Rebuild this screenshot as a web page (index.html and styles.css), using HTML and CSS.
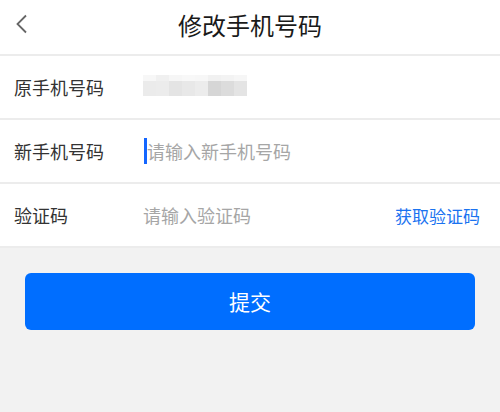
FILE: index.html
```html
<!DOCTYPE html>
<html lang="zh">
<head>
<meta charset="utf-8">
<link rel="stylesheet" href="styles.css">
</head>
<body>
<div class="page">
  <header class="header">
    <svg class="back" width="14" height="20" viewBox="0 0 14 20"><path d="M11 1.5 L2.5 10 L11 18.5" fill="none" stroke="#666" stroke-width="1.8"/></svg>
    <h1 class="title">修改手机号码</h1>
  </header>
  <div class="form">
    <div class="row">
      <span class="label">原手机号码</span>
      <div class="blur">
        <div class="blur-top">
          <i style="background:#f7f7f7"></i><i style="background:#f0f0f0"></i><i style="background:#f6f6f6"></i><i style="background:#f8f8f8"></i><i style="background:#f7f7f7"></i><i style="background:#f1f1f1"></i><i style="background:#f3f3f3"></i><i style="background:#f6f6f6"></i>
        </div>
        <div class="blur-main">
          <i style="background:#ebebeb"></i><i style="background:#ececec"></i><i style="background:#e4e4e4"></i><i style="background:#e8e8e8"></i><i style="background:#ececec"></i><i style="background:#d6d6d6"></i><i style="background:#dcdcdc"></i><i style="background:#e4e4e4"></i>
        </div>
      </div>
    </div>
    <div class="row">
      <span class="label">新手机号码</span>
      <span class="cursor"></span>
      <span class="placeholder">请输入新手机号码</span>
    </div>
    <div class="row">
      <span class="label">验证码</span>
      <span class="placeholder">请输入验证码</span>
      <span class="code">获取验证码</span>
    </div>
  </div>
  <div class="actions">
    <button class="submit">提交</button>
  </div>
</div>
</body>
</html>
```
FILE: styles.css
```css
* { box-sizing: border-box; }
html, body { margin: 0; padding: 0; }
body {
  width: 500px;
  height: 412px;
  overflow: hidden;
  background: #f2f2f2;
  font-family: "Noto Sans CJK SC", "Noto Sans", sans-serif;
}
.header {
  height: 56px;
  background: #fff;
  border-bottom: 2px solid #ececec;
  display: flex;
  align-items: center;
  justify-content: center;
  position: relative;
}
.back {
  position: absolute;
  left: 15px;
  top: 14px;
}
.title {
  margin: 0;
  font-size: 24px;
  font-weight: 400;
  color: #1a1a1a;
  line-height: 1;
  margin-top: -4px;
}
.form { background: #fff; }
.row {
  height: 64px;
  border-bottom: 2px solid #ececec;
  display: flex;
  align-items: center;
  padding: 0 20px 0 14px;
}
.label {
  width: 129px;
  font-size: 18px;
  color: #333;
  line-height: 1;
}
.placeholder {
  font-size: 18px;
  color: #a6a6a6;
  line-height: 1;
  flex: 1;
}
.cursor {
  width: 3px;
  height: 26px;
  background: #1466ff;
  margin-left: 1px;
}
.code {
  font-size: 17px;
  color: #1a73f0;
  line-height: 1;
}
.blur {
  display: flex;
  flex-direction: column;
  margin-top: -4px;
}
.blur-top, .blur-main { display: flex; }
.blur-top i, .blur-main i { display: block; width: 13px; }
.blur-top i { height: 6px; }
.blur-main i { height: 15px; }
.actions {
  padding: 25px 25px 0;
}
.submit {
  display: block;
  width: 100%;
  height: 57px;
  border: none;
  border-radius: 6px;
  background: #006eff;
  color: #fff;
  font-family: inherit;
  font-size: 21px;
  line-height: 1;
  padding: 0;
}
```
